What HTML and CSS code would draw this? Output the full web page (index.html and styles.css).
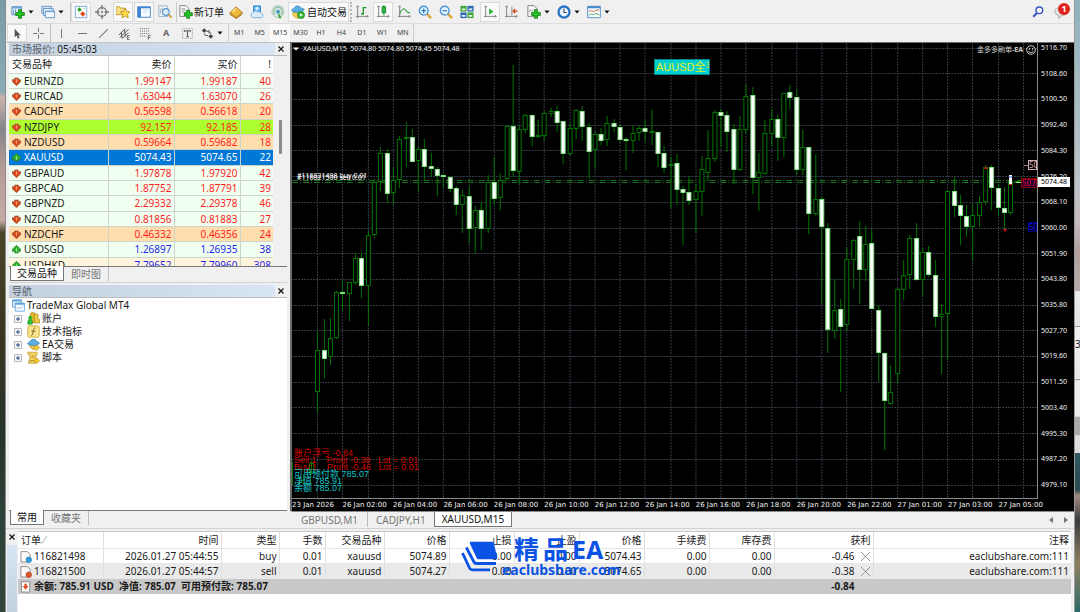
FILE: index.html
```html
<!DOCTYPE html>
<html lang="zh-CN">
<head>
<meta charset="utf-8">
<title>TradeMax Global MT4</title>
<link rel="stylesheet" href="styles.css">
</head>
<body>
<svg class="sprite" aria-hidden="true">
  <symbol id="down" viewBox="0 0 10 10"><path d="M3 1.200h4v1.800h2.600v2.200L5 9.600.4 5.200V3H3z" fill="#d9481d" stroke="#9c4a30" stroke-width=".8"/><path d="M4.300 2.500h1.400v3L5 7l-.7-1.500z" fill="#ff9c70"/></symbol>
  <symbol id="up" viewBox="0 0 10 10"><path d="M3 8.800h4V7h2.600V4.800L5 .4.4 4.800V7H3z" fill="#2fae2f" stroke="#2c7a38" stroke-width=".8"/><path d="M4.300 7.500h1.400v-3L5 3l-.7 1.500z" fill="#90ec88"/></symbol>
  <symbol id="caret" viewBox="0 0 6 6"><path d="M.5 1.500h5L3 4.500z" fill="#111"/></symbol>
  <symbol id="cross" viewBox="0 0 8 8"><path d="M1.500 1.500l5 5M6.500 1.500l-5 5" stroke="#111" stroke-width="1.200"/></symbol>
  <symbol id="expand" viewBox="0 0 8 8"><path d="M.5.5h7v7h-7z" fill="#f6f6f6" stroke="#b9b9b9"/><path d="M2 4h4M4 2v4" stroke="#33478f"/></symbol>
  <symbol id="cancel" viewBox="0 0 12 12"><path d="M1 1l10 10M11 1L1 11" stroke="#8a8a8a"/></symbol>
  <symbol id="plus" viewBox="0 0 10 10"><path d="M3.500.7h3v2.800h2.800v3H6.500v2.800h-3V6.500H.7v-3h2.800z" fill="#22c322" stroke="#117a18" stroke-width=".8"/></symbol>
</svg>
<div class="desk">
<div class="wall wall-left"></div>
<div class="window">
  <div class="toolbar main-bar">
    <div class="group roomy">
      <button class="tb drop" aria-label="新图表"><svg class="ico" viewBox="0 0 16 16"><path d="M1 2h11v9H1z" fill="#e4f0fb" stroke="#4a84b8"/><path d="M1 2h11v2H1z" fill="#6aa6d8"/><path d="M3 6v4M5 5v3" stroke="#4a84b8"/><use href="#plus" x="4.500" y="4.500" width="11.500" height="11.500"/></svg><svg class="car"><use href="#caret"/></svg></button>
      <button class="tb drop" aria-label="配置文件"><svg class="ico" viewBox="0 0 16 16"><path d="M1 1.500h11v8H1z" fill="#cfe3f6" stroke="#5a8fc0"/><path d="M3 4h11v8H3z" fill="#e6f1fb" stroke="#5a8fc0"/><path d="M5 7h10.500v7.500H5z" fill="#f4f9fe" stroke="#5a8fc0"/><path d="M5 7.500h10" stroke="#6aa6d8" stroke-width="1.500"/></svg><svg class="car"><use href="#caret"/></svg></button>
    </div>
    <div class="group split">
      <button class="tb on" aria-label="市场报价"><svg class="ico" viewBox="0 0 16 16"><path d="M1.500 1.500h13v13h-13z" fill="#fff" stroke="#6aa2d8"/><path d="M6 2.500L9 5.500 6.500 8 3.500 5.500z" fill="#2ba32b"/><path d="M10 7l3.200 3.200-3.200 3.200L7 10z" fill="#df4a1b"/><path d="M10 4h3M4 11h2" stroke="#b9d4ee"/></svg></button>
      <button class="tb" aria-label="数据窗口"><svg class="ico" viewBox="0 0 16 16"><circle cx="8" cy="8" r="5" fill="none" stroke="#777" stroke-width="1.600"/><circle cx="8" cy="8" r="1.500" fill="#999"/><path d="M8 0v5M8 11v5M0 8h5M11 8h5" stroke="#777" stroke-width="1.500"/></svg></button>
      <button class="tb on" aria-label="导航"><svg class="ico" viewBox="0 0 16 16"><path d="M0 2h4l1 1.500h5V11H0z" fill="#f7df83" stroke="#c39a2a"/><path d="M10.500 3.500l1.800 3.800 3.700.5-2.700 2.800.7 4.100-3.500-2-3.700 2 .8-4.100-2.800-2.800 3.900-.5z" fill="#ffd94a" stroke="#b5861a" stroke-width=".9"/></svg></button>
      <button class="tb on" aria-label="终端"><svg class="ico" viewBox="0 0 16 16"><path d="M.7 2h14.600v12H.7z" fill="#f5faff" stroke="#3b7ec2"/><path d="M1 2.500h3.500V14H1z" fill="#3b84cc"/><path d="M1 3h14" stroke="#3b84cc" stroke-width="1.500"/><path d="M7 6h6M7 8.500h4" stroke="#c9d9e8"/></svg></button>
      <button class="tb" aria-label="策略测试"><svg class="ico" viewBox="0 0 16 16"><path d="M1 1h10v12H1z" fill="#f7fafc" stroke="#8aa9c4"/><path d="M3 4v6M5 3v5M7 5v5" stroke="#9ab"/><circle cx="9" cy="8" r="3.800" fill="#d9edfb" fill-opacity=".9" stroke="#5d9bd0" stroke-width="1.400"/><path d="M12 11l3.500 3.500" stroke="#d89b2a" stroke-width="2.200"/></svg></button>
    </div>
    <div class="group split">
      <button class="tb label order"><svg class="ico" viewBox="0 0 16 16"><path d="M1 .7h7l3 3V13H1z" fill="#fafafa" stroke="#777"/><path d="M3 4h4M3 6h5M3 8h3" stroke="#999"/><use href="#plus" x="5" y="5" width="11" height="11"/></svg>新订单</button>
      <button class="tb" aria-label="编辑器"><svg class="ico" viewBox="0 0 16 16"><path d="M1 9l7-7 7 6.500-6.500 5.500z" fill="#f2bb3c" stroke="#a8741a"/><path d="M1 9l.5 2 7 4.500.3-1.600M8.500 15.500l6.500-5V8.500" fill="#d89a2a" stroke="#a8741a"/><path d="M8 3.500L4 8" stroke="#ffe7a0" stroke-width="1.500"/></svg></button>
      <button class="tb" aria-label="账户"><svg class="ico" viewBox="0 0 16 16"><path d="M4 1h8v8H4z" fill="#58b0ee" stroke="#2b82c8"/><circle cx="8" cy="4" r="2" fill="#d5edff"/><path d="M3 14.500a3 3 0 0 1 0-5.500 3.500 3.500 0 0 1 6-1 3 3 0 0 1 4 1.500 2.600 2.600 0 0 1 0 5z" fill="#dcebf9" stroke="#7ba6d2"/></svg></button>
      <button class="tb" aria-label="信号"><svg class="ico" viewBox="0 0 16 16"><circle cx="8" cy="7.500" r="7" fill="#d5e6dc" stroke="#b4cdbc"/><path d="M4.500 11a5 5 0 1 1 7 0" fill="none" stroke="#8ab8a0" stroke-width="1.300"/><circle cx="8" cy="7.500" r="2.200" fill="#3d9bd0"/><path d="M8 7l4 8H9z" fill="#3a9c3a"/></svg></button>
    </div>
    <div class="group">
      <button class="tb label on auto"><svg class="ico" viewBox="0 0 16 16"><path d="M2 8c-1 5 4 8 7 7l3-6z" fill="#f5cf4a" stroke="#c19a26" stroke-width=".7"/><path d="M.5 6C2 4 3 4 4 3c1-2.500 6-2.500 7 0 1 1 3 0 4 2-1 4-12 5-14.500 1z" fill="#56aee0" stroke="#2d7fb5" stroke-width=".8"/><circle cx="11.500" cy="11.500" r="4" fill="#2fb52f" stroke="#188018" stroke-width=".7"/><path d="M10.200 9.500v4l3.300-2z" fill="#fff"/></svg>自动交易</button>
    </div>
    <div class="group grip">
      <button class="tb" aria-label="柱状图"><svg class="ico" viewBox="0 0 16 16"><path d="M3 1v14M1 13h14M1.500 2.500L3 1l1.500 1.500M13.500 11.500L15 13l-1.500 1.500" stroke="#777" fill="none"/><path d="M9.500 2v9M9.500 3H13M7 10h2.500" stroke="#1d9a2d" stroke-width="1.500"/></svg></button>
      <button class="tb on" aria-label="蜡烛图"><svg class="ico" viewBox="0 0 16 16"><path d="M3 1v13M1 13h14M1.500 2.500L3 1l1.500 1.500M13.500 11.500L15 13l-1.500 1.500" stroke="#777" fill="none"/><path d="M9 0v12" stroke="#16872a"/><path d="M7 2h4v7H7z" fill="#28b038" stroke="#16872a"/></svg></button>
      <button class="tb" aria-label="折线图"><svg class="ico" viewBox="0 0 16 16"><path d="M3 1v13M1 13h14M1.500 2.500L3 1l1.500 1.500M13.500 11.500L15 13l-1.500 1.500" stroke="#777" fill="none"/><path d="M3 11c2-7 5-8 7-5 1 2 3 3 5 3" stroke="#3b9e4b" fill="none" stroke-width="1.200"/></svg></button>
    </div>
    <div class="group tight">
      <button class="tb" aria-label="放大"><svg class="ico" viewBox="0 0 16 16"><path d="M9.500 9.500l5.500 5.500" stroke="#d9a637" stroke-width="2.800"/><circle cx="6.500" cy="6.500" r="5" fill="#e7f3fd" stroke="#4b93d6" stroke-width="1.600"/><path d="M4 6.500h5M6.500 4v5" stroke="#2d7bc4" stroke-width="1.400"/></svg></button>
      <button class="tb" aria-label="缩小"><svg class="ico" viewBox="0 0 16 16"><path d="M9.500 9.500l5.500 5.500" stroke="#d9a637" stroke-width="2.800"/><circle cx="6.500" cy="6.500" r="5" fill="#e7f3fd" stroke="#4b93d6" stroke-width="1.600"/><path d="M4 6.500h5" stroke="#2d7bc4" stroke-width="1.400"/></svg></button>
      <button class="tb" aria-label="平铺"><svg class="ico" viewBox="0 0 16 16"><path d="M.5 1h7v6.500h-7z" fill="#3fa83a"/><path d="M8.500 1h7v6.500h-7z" fill="#2f66b8"/><path d="M.5 8.500h7V15h-7z" fill="#2f66b8"/><path d="M8.500 8.500h7V15h-7z" fill="#3fa83a"/><path d="M2 4h4v2H2zM10 4h4v2h-4zM2 11.500h4v2H2zM10 11.500h4v2h-4z" fill="#e8f3e8"/></svg></button>
    </div>
    <div class="group split">
      <button class="tb on" aria-label="自动滚动"><svg class="ico" viewBox="0 0 16 16"><path d="M3 1v13M1 13h14M1.500 2.500L3 1l1.500 1.500M13.500 11.500L15 13l-1.500 1.500" stroke="#777" fill="none"/><path d="M7 4v7l5-3.500z" fill="#28b038"/></svg></button>
      <button class="tb" aria-label="图表平移"><svg class="ico" viewBox="0 0 16 16"><path d="M3 1v13M1 13h14M1.500 2.500L3 1l1.500 1.500M13.500 11.500L15 13l-1.500 1.500M9 2v10" stroke="#777" fill="none"/><path d="M15.500 7H11M12.800 4.500L10.500 7l2.300 2.500" stroke="#cc4a1c" stroke-width="1.500" fill="none"/></svg></button>
    </div>
    <div class="group split roomy">
      <button class="tb drop" aria-label="指标"><svg class="ico" viewBox="0 0 16 16"><path d="M1 .7h7l3 3V13H1z" fill="#fafafa" stroke="#777"/><path d="M3 8c1-6 2 2 4-3" stroke="#888" fill="none"/><use href="#plus" x="4.500" y="4.500" width="11.500" height="11.500"/></svg><svg class="car"><use href="#caret"/></svg></button>
      <button class="tb drop" aria-label="周期"><svg class="ico" viewBox="0 0 16 16"><circle cx="8" cy="8" r="6.300" fill="#e8f4ff" stroke="#2573c4" stroke-width="2.600"/><path d="M8 4v4.500h3" stroke="#444" fill="none" stroke-width="1.200"/></svg><svg class="car"><use href="#caret"/></svg></button>
      <button class="tb drop" aria-label="模板"><svg class="ico" viewBox="0 0 16 16"><path d="M.7 1.500h14.600v13H.7z" fill="#f7fbff" stroke="#4a8cc8"/><path d="M1 2.500h14" stroke="#4a8cc8" stroke-width="2.500"/><path d="M2 7.500c3-3 5 2 7-1 2-1 3 0 5-1" stroke="#c25a2a" fill="none"/><path d="M2 12c3-4 5 1 7-2 2-1 3 1 5 1" stroke="#3a9a3a" fill="none"/></svg><svg class="car"><use href="#caret"/></svg></button>
    </div>
    <div class="status">
      <button class="tb" aria-label="搜索"><svg class="ico" viewBox="0 0 16 16"><path d="M7 9L2.500 13.500" stroke="#3553b8" stroke-width="2.400"/><circle cx="9.500" cy="6" r="3.800" fill="#fff" stroke="#3553b8" stroke-width="1.600"/></svg></button>
      <button class="tb mail" aria-label="通知"><svg class="ico" viewBox="0 0 16 16"><path d="M1 6.500C1 4 4 3 8 3s7 1 7 4.500-3 4.500-6 4.500L5 15.500 5.500 12C3 11.500 1 10 1 6.500z" fill="#e2e2e2" stroke="#a5a5a5"/></svg><span class="badge">1</span></button>
    </div>
  </div>
  <div class="toolbar draw-bar">
    <div class="group">
      <button class="tb on" aria-label="光标"><svg class="ico" viewBox="0 0 16 16"><path d="M4.500 2v10.500l2.500-2 1.500 4 2-1-1.700-3.500H12z" fill="#555"/></svg></button>
      <button class="tb" aria-label="十字准线"><svg class="ico" viewBox="0 0 16 16"><path d="M8 1.500v5M8 9.500v5M1.500 8h5M9.500 8h5" stroke="#777" stroke-width="1.300"/></svg></button>
    </div>
    <div class="group split">
      <button class="tb" aria-label="垂直线"><svg class="ico" viewBox="0 0 16 16"><path d="M8 2.500v11" stroke="#777" stroke-width="1.300"/></svg></button>
      <button class="tb" aria-label="水平线"><svg class="ico" viewBox="0 0 16 16"><path d="M2.500 8h11" stroke="#777" stroke-width="1.300"/></svg></button>
      <button class="tb" aria-label="趋势线"><svg class="ico" viewBox="0 0 16 16"><path d="M2.500 13.500l11-11" stroke="#777" stroke-width="1.300"/></svg></button>
      <button class="tb" aria-label="通道"><svg class="ico" viewBox="0 0 16 16"><path d="M1 10L9 2M2 13L13 3M5 14l8-7M4 6l1 8M8 3l1 9" stroke="#555" stroke-width="1.200"/><path d="M14.500 10.500h-3v5h3M11.500 13h2.500" stroke="#555" fill="none"/></svg></button>
      <button class="tb" aria-label="斐波那契"><svg class="ico" viewBox="0 0 16 16"><path d="M1 2h12M1 5h12M1 8h12M1 11h8" stroke="#666" stroke-dasharray="1.500 1"/><path d="M14.500 10.500h-3v5M11.500 13h2.500" stroke="#555" fill="none"/></svg></button>
      <button class="tb glyph">A</button>
      <button class="tb" aria-label="文字标签"><svg class="ico" viewBox="0 0 16 16"><path d="M2 2h12v12H2z" fill="none" stroke="#888" stroke-dasharray="1 1"/><path d="M4.500 6V4.500h7V6M8 4.500v8M6.500 12h3" fill="none" stroke="#555" stroke-width="1.300"/></svg></button>
      <button class="tb drop" aria-label="箭头"><svg class="ico" viewBox="0 0 16 16"><path d="M4 1.500L7 4.500 4 7 1 4.500zM12 9l3 2.500-3 3-3-3z" fill="#444"/><path d="M7 5.500l3-1v3h2.500M3.500 8l2.500 2.500h2.500" fill="none" stroke="#555" stroke-width="1.300"/></svg><svg class="car"><use href="#caret"/></svg></button>
    </div>
    <div class="periods">
      <button>M1</button><button>M5</button><button class="on">M15</button><button>M30</button><button>H1</button><button>H4</button><button>D1</button><button>W1</button><button>MN</button>
    </div>
  </div>

  <div class="workspace">
    <aside class="dock">
      <section class="market">
        <header class="title"><span class="band"><span class="song">市场报价:</span> 05:45:03</span><button class="close" aria-label="关闭"><svg><use href="#cross"/></svg></button></header>
        <div class="quotes-view">
          <table class="quotes">
            <thead><tr><th>交易品种</th><th>卖价</th><th>买价</th><th>!</th></tr></thead>
            <tbody>
              <tr><td><svg><use href="#down"/></svg>EURNZD</td><td>1.99147</td><td>1.99187</td><td>40</td></tr>
              <tr><td><svg><use href="#down"/></svg>EURCAD</td><td>1.63044</td><td>1.63070</td><td>26</td></tr>
              <tr class="peach"><td><svg><use href="#down"/></svg>CADCHF</td><td>0.56598</td><td>0.56618</td><td>20</td></tr>
              <tr class="lime"><td><svg><use href="#down"/></svg>NZDJPY</td><td>92.157</td><td>92.185</td><td>28</td></tr>
              <tr class="peach"><td><svg><use href="#down"/></svg>NZDUSD</td><td>0.59664</td><td>0.59682</td><td>18</td></tr>
              <tr class="picked"><td><svg><use href="#up"/></svg>XAUUSD</td><td>5074.43</td><td>5074.65</td><td>22</td></tr>
              <tr><td><svg><use href="#down"/></svg>GBPAUD</td><td>1.97878</td><td>1.97920</td><td>42</td></tr>
              <tr><td><svg><use href="#down"/></svg>GBPCAD</td><td>1.87752</td><td>1.87791</td><td>39</td></tr>
              <tr><td><svg><use href="#down"/></svg>GBPNZD</td><td>2.29332</td><td>2.29378</td><td>46</td></tr>
              <tr><td><svg><use href="#down"/></svg>NZDCAD</td><td>0.81856</td><td>0.81883</td><td>27</td></tr>
              <tr class="peach"><td><svg><use href="#down"/></svg>NZDCHF</td><td>0.46332</td><td>0.46356</td><td>24</td></tr>
              <tr class="rise"><td><svg><use href="#up"/></svg>USDSGD</td><td>1.26897</td><td>1.26935</td><td>38</td></tr>
              <tr class="rise cream"><td><svg><use href="#up"/></svg>USDHKD</td><td>7.79652</td><td>7.79960</td><td>308</td></tr>
            </tbody>
          </table>
          <div class="scroll"><div class="thumb"></div></div>
        </div>
        <nav class="tabs"><button class="active">交易品种</button><button>即时图</button></nav>
      </section>
      <section class="navigator">
        <header class="title"><span class="band"><span class="song">导航</span></span><button class="close" aria-label="关闭"><svg><use href="#cross"/></svg></button></header>
        <ul class="tree">
          <li class="root"><svg viewBox="0 0 16 16"><path d="M.7 1h11v9H.7z" fill="#d8ebfa" stroke="#5aa0d8"/><path d="M1 2h10.500" stroke="#5aa0d8" stroke-width="2"/><path d="M4 5h11.300v10H4z" fill="#f4faff" stroke="#5aa0d8"/><path d="M4 6h11" stroke="#5aa0d8" stroke-width="2"/><path d="M6 12l2-2 2 2 3-3" stroke="#7ab3de" fill="none"/></svg>TradeMax Global MT4</li>
          <li><svg class="exp"><use href="#expand"/></svg><svg viewBox="0 0 16 16"><path d="M4 3.500a3 3 0 0 1 6 0c0 2-1 3-1 3.500 3 1 4 2 4 6H2c0-4 1-5 3-6-1-1-1-2-1-3.500z" fill="#e8bd2c" stroke="#9a7a12" stroke-width=".8"/><path d="M9 3a3 3 0 0 1 5 1c0 2-1 2.500-1 3.500 2 .5 2.700 2 2.700 6H9z" fill="#f0ca3e" stroke="#9a7a12" stroke-width=".8"/><path d="M1 15v-3c0-2 1-2 2-3a2 2 0 1 1 2 0c1 1 1.500 1 1.500 3v3z" fill="#2fc03a" stroke="#16872a" stroke-width=".7"/></svg>账户</li>
          <li><svg class="exp"><use href="#expand"/></svg><svg viewBox="0 0 16 16"><rect x="1" y="1" width="14" height="14" rx="2" fill="#f9e58c" stroke="#c9a227"/><path d="M10.500 4c-2-1-2.300 1-2.600 3L7 11c-.3 1.500-1 2-2 1.500M5.500 7.500h5" fill="none" stroke="#6b5a1c" stroke-width="1.100"/></svg>技术指标</li>
          <li><svg class="exp"><use href="#expand"/></svg><svg viewBox="0 0 16 16"><path d="M3 8c0 4 4 7 7 6l2-6z" fill="#e8c04a" stroke="#b08a20" stroke-width=".7"/><path d="M.5 7C2 4.500 3.500 5 4.500 3.500c1-2.500 6-2.500 7 0 .5 1.500 3 1 4 3-2 3-12 4-15 .5z" fill="#5aaede" stroke="#2d7fb5" stroke-width=".8"/><path d="M12 8.500l3.500 3.500-3.500 3.500L8.500 12z" fill="#f4cf3a" stroke="#a8821a" stroke-width=".8"/></svg>EA交易</li>
          <li><svg class="exp"><use href="#expand"/></svg><svg viewBox="0 0 16 16"><path d="M1 1.500h11c1 0 1.500 3 0 3h-1V12H3.500V4.500H2C.5 4.500.5 2 1 1.500zM2 12h9v3H2z" fill="#f4d566" stroke="#b8922a" stroke-width=".9"/><path d="M5.500 6h4M5.500 8h4" stroke="#b8922a"/><path d="M12 8.500l3.500 3.500-3.500 3.500L8.500 12z" fill="#f7c92a" stroke="#a8821a" stroke-width=".8"/></svg>脚本</li>
        </ul>
        <nav class="tabs"><button class="active">常用</button><button>收藏夹</button></nav>
      </section>
    </aside>

    <main class="chart-pane">
      <div class="chart">
        <div class="plot">
          <svg id="candles" viewBox="292 43 746 455" preserveAspectRatio="none" role="img" aria-label="XAUUSD M15"></svg>
          <div class="caption"><svg viewBox="0 0 6 6"><path d="M0 1.500h6L3 4.500z" fill="#fff"/></svg><span>XAUUSD,M15&nbsp; 5074.80 5074.80 5074.45 5074.48</span></div>
          <div class="expert"><span>金多多刷单<b>-EA</b></span><svg viewBox="0 0 10 10"><circle cx="5" cy="5" r="4.300" fill="none" stroke="#fff" stroke-width=".8"/><circle cx="3.500" cy="4" r=".7" fill="#fff"/><circle cx="6.500" cy="4" r=".7" fill="#fff"/><path d="M2.500 6c1 2 4 2 5 0" fill="none" stroke="#fff" stroke-width=".8"/></svg></div>
          <button class="flat">AUUSD全平</button>
          <div class="trade buy">#116821498 buy 0.01</div>
          <div class="trade sell">#116821500 sell 0.01</div>
          <div class="tag pink">50</div>
          <div class="tag red">507</div>
          <div class="tag blue">50</div>
          <div class="account">
            <div>账户浮亏 -0.84</div>
            <div>Sell:1 &nbsp;&nbsp; Profit -0.38 &nbsp;&nbsp;Lot = 0.01</div>
            <div>Buy:1 &nbsp;&nbsp; Profit -0.46 &nbsp;&nbsp;Lot = 0.01</div>
            <div class="cyan">可用预付款 785.07</div>
            <div class="cyan">净值 785.91</div>
            <div class="cyan">余额 785.07</div>
          </div>
        </div>
        <div class="prices">
          <span>5116.70</span><span>5108.60</span><span>5100.50</span><span>5092.40</span><span>5084.30</span><span>5076.20</span><span>5068.10</span><span>5060.00</span><span>5051.90</span><span>5043.80</span><span>5035.80</span><span>5027.70</span><span>5019.60</span><span>5011.50</span><span>5003.40</span><span>4995.30</span><span>4987.20</span><span>4979.10</span>
          <b class="now">5074.48</b>
        </div>
        <div class="times">
          <span>23 Jan 2026</span><span>26 Jan 02:00</span><span>26 Jan 04:00</span><span>26 Jan 06:00</span><span>26 Jan 08:00</span><span>26 Jan 10:00</span><span>26 Jan 12:00</span><span>26 Jan 14:00</span><span>26 Jan 16:00</span><span>26 Jan 18:00</span><span>26 Jan 20:00</span><span>26 Jan 22:00</span><span>27 Jan 01:00</span><span>27 Jan 03:00</span><span>27 Jan 05:00</span>
        </div>
      </div>
      <nav class="chart-tabs">
        <button>GBPUSD,M1</button><button>CADJPY,H1</button><button class="active">XAUUSD,M15</button>
        <span class="arrows"><svg viewBox="0 0 6 8"><path d="M5 1v6L1 4z" fill="#777"/></svg><svg viewBox="0 0 6 8"><path d="M1 1v6l4-3z" fill="#777"/></svg></span>
      </nav>
    </main>
  </div>

  <section class="terminal">
    <div class="rail"><button class="close" aria-label="关闭"><svg><use href="#cross"/></svg></button><div class="rail-band"></div></div>
    <div class="sheet">
      <table class="orders">
        <colgroup><col class="c-id"><col class="c-time"><col class="c-type"><col class="c-lots"><col class="c-symbol"><col class="c-num"><col class="c-num"><col class="c-num"><col class="c-num"><col class="c-num"><col class="c-num"><col class="c-profit"><col></colgroup>
        <thead><tr><th>订单 <i>⁄</i></th><th>时间</th><th>类型</th><th>手数</th><th>交易品种</th><th>价格</th><th>止损</th><th>止盈</th><th>价格</th><th>手续费</th><th>库存费</th><th>获利</th><th>注释</th></tr></thead>
        <tbody>
          <tr><td><svg class="row-ico" viewBox="0 0 13 13"><path d="M1 .7h7l3 3V12H1z" fill="#fafafa" stroke="#888"/><circle cx="9.500" cy="9.500" r="3" fill="#2f9be0" stroke="#1c6ca8" stroke-width=".6"/></svg>116821498</td><td>2026.01.27 05:44:55</td><td>buy</td><td>0.01</td><td>xauusd</td><td>5074.89</td><td>0.00</td><td>0.00</td><td>5074.43</td><td>0.00</td><td>0.00</td><td>-0.46<button class="cancel" aria-label="平仓"><svg><use href="#cancel"/></svg></button></td><td>eaclubshare.com:111</td></tr>
          <tr class="alt"><td><svg class="row-ico" viewBox="0 0 13 13"><path d="M1 .7h7l3 3V12H1z" fill="#fafafa" stroke="#888"/><circle cx="9.500" cy="9.500" r="3" fill="#e2552a" stroke="#a0341a" stroke-width=".6"/></svg>116821500</td><td>2026.01.27 05:44:57</td><td>sell</td><td>0.01</td><td>xauusd</td><td>5074.27</td><td>0.00</td><td>0.00</td><td>5074.65</td><td>0.00</td><td>0.00</td><td>-0.38<button class="cancel" aria-label="平仓"><svg><use href="#cancel"/></svg></button></td><td>eaclubshare.com:111</td></tr>
          <tr class="total"><td colspan="11"><svg class="row-ico" viewBox="0 0 13 13"><path d="M1.500.7h9V12h-9z" fill="#fafafa" stroke="#888"/><path d="M4.800 3h2.400v2.500h2L6 9.500 2.800 5.500h2z" fill="#df4a1b"/></svg>余额: 785.91 USD&nbsp; 净值: 785.07&nbsp; 可用预付款: 785.07</td><td>-0.84</td><td></td></tr>
        </tbody>
      </table>
      <div class="brand">
        <svg viewBox="0 0 37 31" fill="none" stroke="#0b53e4"><path d="M10 2h21.500l3.500 15H17z" fill="#0b53e4" stroke-width="2.500" stroke-linejoin="round"/><path d="M5.300 6.500L13 21q.8 1.500 2.500 1.500H35" stroke-width="2.800"/><path d="M1.500 12L8.500 27q.8 1.800 3 1.800H29" stroke-width="2.800"/></svg>
        <div class="brand-name"><span>精</span><span>品</span><span>EA</span></div>
        <div class="brand-site">eaclubshare.com</div>
      </div>
    </div>
  </section>
</div>
<div class="wall wall-right"><span>3</span></div>
</div>
<script src="chart.js"></script>
</body>
</html>
```

FILE: styles.css
```css
* { box-sizing: border-box; }
body {
  margin: 0;
  font: 10px/14px "Noto Sans", "Noto Sans CJK SC", sans-serif;
  color: #1a1a1a;
}
button {
  font: inherit;
  color: inherit;
  background: none;
  border: 0;
  padding: 0;
  margin: 0;
}
.sprite { position: absolute; width: 0; height: 0; }

.desk { display: flex; height: 100vh; min-height: 560px; overflow: hidden; }
.wall { flex: none; width: 6px; overflow: hidden; }
.wall-left {
  border-right: 1px solid #8b8b8b;
  background: linear-gradient(#7a9ba5 0, #8aacb5 15%, #cdb3ab 16%, #85858c 21%, #b39a94 27%, #c7aca5 36%, #4a4428 38%, #3a3520 55%, #26332a 70%, #2d4238 85%, #33453a 100%);
}
.wall-right {
  border-left: 1px solid #9a9a9a;
  background: linear-gradient(#8fb2bd 0, #bcc3c8 30%, #c6bcc0 36%, #b29f9f 41%, #b9abab 47.500%, #ececec 47.500%, #e4e4e4 53.300%, #999 53.300%, #999 53.500%, #f0f0f0 53.500%, #e8e8e8 62%, #999 62%, #eee 62.200%, #eee 68%, #aaa 68.200%, #aaa 71%, #ddd 71.200%, #ddd 74%, #2f5a60 74.100%, #2b4a50 80%, #a58a80 81%, #3a3c40 85%, #8f7f60 92%, #2a6a68 100%);
}
.wall-right span { display: block; padding-top: 55vh; line-height: 14px; }

.window { flex: 1; min-width: 0; display: flex; flex-direction: column; background: #f0f0f0; }

/* toolbars */
.toolbar { display: flex; align-items: center; flex: none; border-bottom: 1px solid #dcdcdc; }
.main-bar { height: 24px; padding-left: 2px; }
.draw-bar { height: 18px; padding-left: 1px; border-bottom: 0; }
.group { display: flex; gap: 1px; }
.roomy { gap: 2px; }
.tight { margin-left: 1px; }
.main-bar .split { margin-left: 2px; padding-left: 1px; }
.main-bar .roomy + .split { margin-left: 4px; border-left: 1px solid #c8c8c8; padding-left: 0; }
.main-bar .group:nth-child(3) { margin-left: 1px; padding-left: 0; border-left: 1px solid #c8c8c8; }
.grip { margin-left: 1px; padding-left: 0; border-left: 2px dotted #b5b5b5; }
.tb { display: flex; align-items: center; justify-content: center; width: 20px; height: 18px; flex: none; position: relative; }
.main-bar .tb { height: 20px; }
.tb.on { background: #f9f9f9; border: 1px solid #dadada; }
.ico { width: 14px; height: 14px; flex: none; }
.draw-bar .ico { width: 13px; height: 13px; }
.drop { width: 28px; justify-content: flex-start; padding-left: 3px; }
.car { width: 6px; height: 6px; margin-left: 3px; }
.label { justify-content: flex-start; padding-left: 2px; gap: 1px; white-space: nowrap; color: #111; }
.order { width: 48px; }
.auto { width: 61px; gap: 2px; }
.glyph { font-weight: bold; color: #666; font-size: 9px; }
.draw-bar .split { margin-left: 2px; border-left: 1px solid #bbb; }
.periods {
  display: grid;
  grid-template-columns: repeat(9, 1fr);
  width: 186px;
  height: 18px;
  margin-left: 2px;
  border-left: 1px solid #ccc;
  border-right: 1px solid #ccc;
  font-size: 7px;
  color: #444;
}
.periods .on { background: #fafafa; }
.status { display: flex; gap: 3px; margin-left: auto; padding-right: 3px; }
.badge {
  position: absolute;
  top: 1px;
  right: 1px;
  width: 12px;
  height: 12px;
  border-radius: 6px;
  background: #e0241b;
  color: #fff;
  font: bold 9px/12px "Noto Sans", sans-serif;
}

/* docks */
.workspace { flex: 1; min-height: 0; display: grid; grid-template-columns: 284px minmax(0, 1fr); }
.dock { display: flex; flex-direction: column; min-height: 0; padding: 0 3px 2px; border-top: 1px solid #c4c4c4; }
.title { display: flex; height: 12px; line-height: 12px; }
.band { flex: 1; padding-left: 3px; background: linear-gradient(90deg, #c3d0de, #d8e6f4); }
.song { color: #555f6a; }
.close { width: 12px; height: 12px; display: grid; place-items: center; }
.close svg { width: 8px; height: 8px; }
.quotes-view { display: flex; height: 211px; overflow: hidden; border-top: 1px solid #bbb; background: #f0f0f0; }
.quotes { flex: 1; height: 217px; border-collapse: collapse; table-layout: fixed; }
.quotes th, .quotes td { height: 15px; padding: 0 2px 0 0; text-align: right; line-height: 12px; border-right: 1px solid #ccd4cc; border-bottom: 1px solid #ccd4cc; white-space: nowrap; }
.quotes th { height: 17px; background: #fff; font-weight: normal; }
.quotes th:first-child, .quotes td:first-child { width: 99px; text-align: left; padding-left: 3px; }
.quotes th:last-child, .quotes td:last-child { width: 33px; border-right: 0; }
.quotes td { background: #f0fff0; color: #ff1e1e; }
.quotes td:first-child { color: #1a1a1a; }
.quotes td svg { width: 9px; height: 9px; margin-right: 3px; vertical-align: -1px; }
.quotes .peach td { background: #ffdead; }
.quotes .lime td { background: #adff2f; }
.quotes .rise td:not(:first-child) { color: #1f1fee; }
.quotes .cream td { background: #fff5dc; }
.quotes .picked td { background: #0078d7; color: #fff; }
.scroll { width: 14px; padding: 64px 5px 0 6px; }
.thumb { width: 3px; height: 34px; background: #8a8a8a; border-radius: 1px; }

.tabs { display: flex; height: 16px; flex: none; border-top: 1px solid #777; color: #777; }
.tabs button { height: 14px; padding: 0 7px; border-right: 1px solid #bbb; }
.tabs .active { margin: -1px 0 0 1px; height: 15px; padding: 0 6px; background: #fff; color: #111; border: 1px solid #777; border-top: 0; }
.market { flex: none; border-bottom: 1px solid #d2d2d2; }
.navigator { flex: 1; min-height: 0; display: flex; flex-direction: column; padding-top: 2px; }
.tree { flex: 1; min-height: 0; margin: 0; padding: 0 3px; list-style: none; background: #fff; border-top: 1px solid #bbb; line-height: 13px; overflow: hidden; }
.tree li { display: flex; align-items: center; gap: 2px; padding-left: 2px; height: 13px; }
.tree .root { padding-left: 0; height: 14px; }
.tree svg { width: 13px; height: 13px; flex: none; }
.tree .exp { width: 8px; height: 8px; margin-right: 3px; }

/* chart */
.chart-pane { display: flex; flex-direction: column; min-height: 0; }
.chart {
  flex: 1;
  min-height: 0;
  display: grid;
  grid-template: minmax(0, 1fr) 12px / minmax(0, 1fr) 36px;
  background: #000;
  color: #f2f2f2;
  border-left: 2px solid #6c6c6c;
  border-top: 1px solid #6c6c6c;
  font-size: 7px;
  line-height: 8px;
}
.plot { position: relative; overflow: hidden; border-right: 1px solid #8a8a8a; border-bottom: 1px solid #8a8a8a; }
#candles { position: absolute; width: 100%; height: 100%; }
.grid { stroke: #343d46; stroke-dasharray: 2 1; }
.level { stroke: #1d6b1d; stroke-dasharray: 6 2 1 2; }
.wick, .hollow { stroke: #007400; fill: none; }
.hollow { fill: #000; }
.solid { fill: #fff; stroke: #7fe07f; }
.caption, .expert, .flat, .trade, .tag, .account { position: absolute; white-space: nowrap; }
.caption { top: 2px; left: 1px; display: flex; align-items: center; gap: 4px; }
.caption svg { width: 6px; height: 6px; }
.expert { top: 2px; right: 1px; display: flex; align-items: center; gap: 3px; color: #ccc; }
.expert svg { width: 10px; height: 10px; }
.flat {
  top: 16px;
  left: 362px;
  width: 56px;
  height: 16px;
  padding-left: 1px;
  overflow: hidden;
  text-align: left;
  background: #00ced1;
  border: 1px solid #008a8c;
  color: #e6f01e;
  font: 11px/14px "Liberation Sans", "Noto Sans CJK SC", sans-serif;
}
.trade { left: 5px; color: #fff; }
.buy { top: 129px; }
.sell { top: 131px; }
.tag { right: 0; height: 10px; width: 9px; overflow: hidden; border: 1px solid; line-height: 8px; font-size: 8px; }
.pink { top: 117px; color: #d8a8b0; }
.red { top: 135px; width: 16px; color: #f00000; border-color: #8b0000; background: #1a0040; }
.blue { top: 179px; color: #1414ff; border-color: #000090; background: #000018; }
.account { left: 2px; bottom: 6px; color: #d40000; font: 9px/7px "Liberation Sans", "Noto Sans CJK SC", sans-serif; }
.cyan { color: #12c4c8; }
.prices { position: relative; display: flex; flex-direction: column; justify-content: space-between; padding: 1px 0 10px 3px; }
.now { position: absolute; top: 134px; left: 0; width: 32px; padding-left: 3px; background: #fff; color: #000; font-weight: normal; line-height: 10px; }
.times { grid-column: 1 / 3; display: grid; grid-template-columns: repeat(15, 1fr); padding: 2px 25px 0 0; white-space: nowrap; font-family: "DejaVu Sans", sans-serif; }

.chart-tabs { display: flex; flex: none; height: 17px; border-top: 1px solid #8a8a8a; color: #777; border-left: 2px solid #f0f0f0; }
.chart-tabs button { height: 15px; padding: 0 9px; border-right: 1px solid #bbb; }
.chart-tabs button:nth-child(2) { padding: 0 8px; border: 0; }
.chart-tabs .active { background: #fff; color: #111; border: 1px solid #777; border-top: 0; padding: 0 7px; }
.arrows { margin-left: auto; display: flex; align-items: center; gap: 9px; padding-right: 5px; }
.arrows svg { width: 6px; height: 8px; }

/* terminal */
.terminal { flex: none; display: flex; height: 84px; padding-top: 2px; border-top: 1px solid #d2d2d2; }
.rail { width: 12px; display: flex; flex-direction: column; }
.rail-band { flex: 1; margin: 2px 1px 0; background: linear-gradient(#d8e6f4, #c3d0de); }
.sheet { position: relative; flex: 1; min-width: 0; margin-right: 3px; background: #fff; border-top: 1px solid #c8c8c8; }
.orders { width: 100%; border-collapse: collapse; table-layout: fixed; }
.c-id { width: 85px; }
.c-time { width: 118px; }
.c-type { width: 58px; }
.c-lots { width: 46px; }
.c-symbol { width: 59px; }
.c-num { width: 65px; }
.c-profit { width: 99px; }
.orders th, .orders td { height: 16px; padding: 0 2px 0 0; text-align: right; line-height: 14px; font-weight: normal; white-space: nowrap; border-right: 1px solid #e0e0e0; border-bottom: 1px solid #e6e6e6; }
.orders td { height: 15px; }
.orders th:first-child, .orders td:first-child { text-align: left; padding-left: 3px; }
.orders th:last-child, .orders td:last-child { border-right: 0; }
.orders i { color: #aaa; }
.row-ico { width: 12px; height: 12px; margin: 0 2px 0 -1px; vertical-align: -3px; }
.alt td { background: #eaeaea; }
.orders .total td { background: #c8c8c8; border-color: #c8c8c8; font-weight: bold; }
.orders .total td:nth-child(2) { padding-right: 18px; }
.cancel { width: 11px; height: 11px; margin-left: 5px; vertical-align: -2px; }
.cancel svg { width: 11px; height: 11px; display: block; }
.brand { position: absolute; left: 443px; top: 3px; display: grid; grid-template-columns: 41px auto; color: #0b53e4; font-weight: bold; }
.brand svg { width: 37px; height: 31px; margin-top: 6px; grid-row: 1 / 3; }
.brand-name { display: flex; gap: 4px; padding-left: 12px; font-size: 25px; line-height: 28px; }
.brand-site { font-size: 14px; line-height: 14px; }
```

FILE: chart.js
```js
// One row per M15 bar: high, low, body top, body bottom, 1 = bearish (filled).
const bars = [
  [331,413,350,392,0],[319,378,350,359,1],[318,365,338,357,0],[291,339,292,338,0],[280,310,292,294,1],
  [282,321,282,294,0],[253,285,258,283,0],[253,298,258,286,1],[231,326,235,286,0],[179,238,182,235,0],
  [147,191,153,182,0],[149,203,153,194,1],[167,205,180,193,0],[136,188,139,180,0],[122,167,137,139,0],
  [129,162,137,162,1],[147,191,149,161,0],[139,181,149,167,1],[153,177,166,169,1],[167,196,169,176,1],
  [174,188,175,177,1],[176,192,177,189,1],[186,215,188,205,1],[190,233,195,205,0],[186,243,196,229,1],
  [206,253,210,228,0],[202,250,210,229,1],[175,233,182,229,0],[157,205,182,199,1],[173,210,180,198,0],
  [125,180,126,179,0],[65,177,126,171,1],[125,184,129,172,0],[114,133,115,130,0],[114,146,115,137,1],
  [120,138,135,137,0],[111,141,113,136,0],[108,117,111,114,0],[106,132,111,123,1],[121,164,121,154,1],
  [123,156,128,154,0],[109,139,110,129,0],[106,141,111,127,1],[123,179,127,152,1],[132,169,134,150,0],
  [128,145,134,141,1],[116,146,123,140,0],[119,132,123,127,1],[124,142,127,140,1],[137,170,139,141,1],
  [125,153,133,141,0],[125,141,128,133,0],[120,142,128,132,1],[110,145,131,133,0],[132,167,132,154,1],
  [146,173,153,168,1],[157,208,164,166,0],[154,205,163,190,1],[186,245,189,193,1],[176,205,192,201,1],
  [184,233,191,200,0],[156,216,169,192,0],[130,181,158,173,0],[110,162,112,159,0],[109,147,112,116,1],
  [111,152,115,132,1],[124,184,129,170,1],[116,171,129,170,0],[84,134,96,130,0],[87,194,95,178,1],
  [153,211,172,178,0],[120,174,133,174,0],[109,146,119,134,0],[115,161,119,138,1],[93,157,93,138,0],
  [85,109,92,98,1],[90,175,97,170,1],[130,175,147,170,0],[147,234,147,214,1],[154,216,199,214,0],
  [197,304,199,227,1],[223,353,228,330,1],[279,339,310,331,0],[299,392,309,327,1],[247,330,259,325,0],
  [239,289,240,260,0],[221,304,236,270,1],[226,281,244,270,0],[230,309,243,309,1],[305,382,310,353,1],
  [352,450,353,401,1],[365,405,392,404,0],[288,383,289,374,0],[260,300,275,290,0],[235,289,238,275,0],
  [223,281,238,280,1],[248,297,252,280,0],[246,277,252,275,1],[260,327,275,317,1],[304,374,314,317,0],
  [190,359,191,314,0],[177,217,191,206,1],[195,245,205,216,1],[205,237,216,227,1],[203,261,215,227,0],
  [196,227,202,216,0],[165,205,167,202,0],[165,210,167,188,1],[184,216,188,208,1],[187,230,208,213,1],
  [180,215,181,213,0],[181,182,181,182,0]
];

const out = [];
const line = (cls, x1, y1, x2, y2) =>
  out.push(`<line class="${cls}" x1="${x1}" y1="${y1}" x2="${x2}" y2="${y2}"/>`);

for (let k = 0; k < 18; k++) {
  const y = Math.round(47.6 + k * 25.7) + 0.5;
  line("grid", 292, y, 1038, y);
}
for (let k = 0; k < 29; k++) {
  const x = Math.floor(317.7 + k * 25.24) + 0.5;
  line("grid", x, 43, x, 498);
}
line("level", 292, 180.5, 1038, 180.5);
line("level", 292, 182.5, 1038, 182.5);

bars.forEach(([high, low, top, bottom, filled], i) => {
  const x = Math.floor(317.7 + i * 6.31) + 0.5;
  line("wick", x, high, x, low);
  out.push(`<rect class="${filled ? "solid" : "hollow"}" x="${x - 2}" y="${top + 0.5}" width="4" height="${Math.max(bottom - top - 1, 1)}"/>`);
});

// Clipped bars in the lower left corner.
out.push('<path class="wick" d="M292.500 462v23M311.500 461v13M309.500 463.500h4v10h-4zM299.500 476v8M303.500 474v10"/>');
// Trade markers on the latest bars.
out.push('<path d="M985 169l2-3 2 3zM1004 229l2 3 2-3z" fill="#d01010"/>');
out.push('<path d="M1011.500 175v10" stroke="#fff" stroke-width="3"/><path d="M1010 177h3" stroke="#3c50e0"/><path d="M1010 184.500h3" stroke="#e02020"/>');
out.push('<path d="M1025 165.500h4" stroke="#a87880"/><path d="M1017 182.500h6" stroke="#90ee90"/>');

document.getElementById("candles").innerHTML = out.join("");
```
